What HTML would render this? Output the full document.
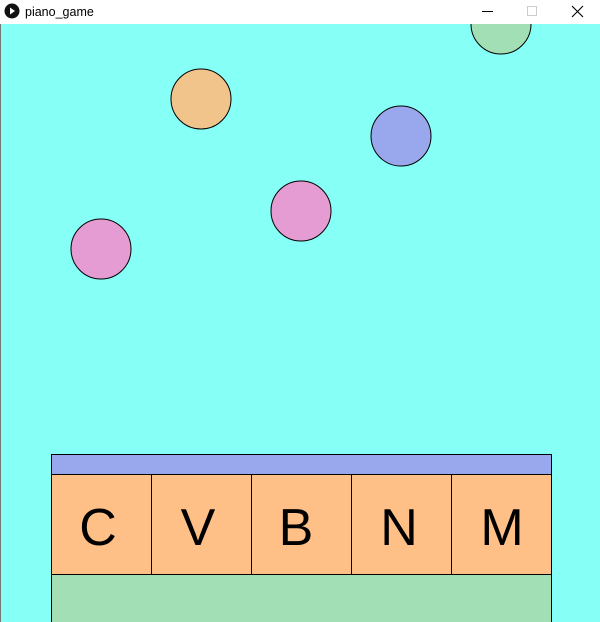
<!DOCTYPE html>
<html><head><style>
html,body{margin:0;padding:0;width:600px;height:622px;overflow:hidden;background:#fff;}
</style></head><body>
<svg width="600" height="622" xmlns="http://www.w3.org/2000/svg" style="display:block">
<rect x="0" y="0" width="600" height="24" fill="#fff"/>
<circle cx="12" cy="11" r="7.5" fill="#111"/>
<path d="M10 7.5 L15 11 L10 14.5 Z" fill="#fff"/>
<text x="25" y="16" font-family="Liberation Sans, sans-serif" font-size="12.5" fill="#000">piano_game</text>
<line x1="482" y1="11.5" x2="493" y2="11.5" stroke="#000" stroke-width="1"/>
<rect x="527.5" y="6.5" width="9" height="9" fill="none" stroke="#ccc" stroke-width="1"/>
<path d="M572 6 L583 17 M583 6 L572 17" stroke="#000" stroke-width="1.1"/>
<rect x="0" y="24" width="600" height="598" fill="#86fff7"/>
<rect x="0" y="24" width="1" height="598" fill="#777"/>
<circle cx="501" cy="24" r="30" fill="#a3dfb4" stroke="#000" stroke-width="1"/>
<rect x="0" y="0" width="600" height="24" fill="#fff"/>
<circle cx="12" cy="11" r="7.5" fill="#111"/>
<path d="M10 7.5 L15 11 L10 14.5 Z" fill="#fff"/>
<text x="25" y="16" font-family="Liberation Sans, sans-serif" font-size="12.5" fill="#000">piano_game</text>
<line x1="482" y1="11.5" x2="493" y2="11.5" stroke="#000" stroke-width="1"/>
<rect x="527.5" y="6.5" width="9" height="9" fill="none" stroke="#ccc" stroke-width="1"/>
<path d="M572 6 L583 17 M583 6 L572 17" stroke="#000" stroke-width="1.1"/>
<circle cx="201" cy="99" r="30" fill="#f0c48a" stroke="#000" stroke-width="1"/>
<circle cx="401" cy="136" r="30" fill="#99a8ec" stroke="#000" stroke-width="1"/>
<circle cx="301" cy="211" r="30" fill="#e59cd2" stroke="#000" stroke-width="1"/>
<circle cx="101" cy="249" r="30" fill="#e59cd2" stroke="#000" stroke-width="1"/>
<rect x="51.5" y="454.5" width="500" height="20" fill="#99a8ec" stroke="#000" stroke-width="1"/>
<rect x="51.5" y="574.5" width="500" height="60" fill="#a3dfb4" stroke="#000" stroke-width="1"/>
<g fill="#ffc088" stroke="#000" stroke-width="1">
<rect x="51.5" y="474.5" width="100" height="100"/>
<rect x="151.5" y="474.5" width="100" height="100"/>
<rect x="251.5" y="474.5" width="100" height="100"/>
<rect x="351.5" y="474.5" width="100" height="100"/>
<rect x="451.5" y="474.5" width="100" height="100"/>
</g>
<g font-family="Liberation Sans, sans-serif" font-size="52" fill="#000" text-anchor="middle">
<text x="98" y="545">C</text>
<text x="198" y="545">V</text>
<text x="296" y="545">B</text>
<text x="399" y="545">N</text>
<text x="502" y="545">M</text>
</g>
</svg>
</body></html>
